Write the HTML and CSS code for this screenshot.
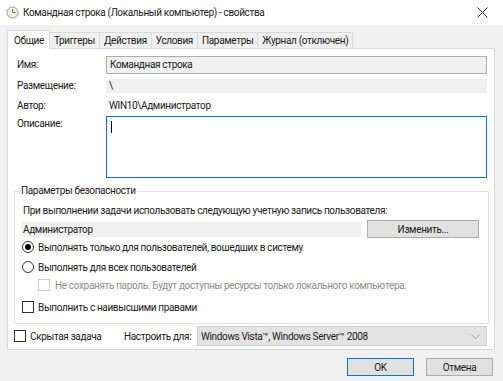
FILE: index.html
```html
<!DOCTYPE html>
<html lang="ru">
<head>
  <meta charset="UTF-8" />
  <title>Командная строка (Локальный компьютер) - свойства</title>
  <link rel="stylesheet" href="styles.css">
</head>
<body>

<!-- Title bar -->
<div class="titlebar">
  <svg class="app-icon" width="13" height="13" viewBox="0 0 13 13">
    <circle cx="6.5" cy="6.5" r="5.5" fill="#f3f0e2" stroke="#9a9a8e" stroke-width="1"/>
    <path d="M6.5 3 V6.5 H9" fill="none" stroke="#6b6b60" stroke-width="1"/>
  </svg>
  <span class="title">Командная строка (Локальный компьютер) - свойства</span>
  <svg class="close" width="11" height="11" viewBox="0 0 11 11">
    <path d="M0.5 0.5 L10.5 10.5 M10.5 0.5 L0.5 10.5" stroke="#333" stroke-width="1"/>
  </svg>
</div>

<!-- Tabs -->
<div class="tabs">
  <div class="tab active">Общие</div>
  <div class="tab">Триггеры</div>
  <div class="tab">Действия</div>
  <div class="tab">Условия</div>
  <div class="tab">Параметры</div>
  <div class="tab">Журнал (отключен)</div>
</div>

<div class="panel">
  <div class="info">
    <div class="lbl">Имя:</div>
    <div class="field readonly">Командная строка</div>

    <div class="lbl">Размещение:</div>
    <div class="field band">\</div>

    <div class="lbl author">Автор:</div>
    <div class="field plain">WIN10\Администратор</div>

    <div class="lbl desc">Описание:</div>
    <div class="field area"><span class="caret"></span></div>
  </div>

  <!-- Security group -->
  <div class="group">
    <div class="legend">Параметры безопасности</div>
    <div class="line">При выполнении задачи использовать следующую учетную запись пользователя:</div>
    <div class="account">
      <div class="account-name">Администратор</div>
      <button class="btn change">Изменить...</button>
    </div>
    <div class="option first">
      <span class="radio checked"></span>Выполнять только для пользователей, вошедших в систему
    </div>
    <div class="option second">
      <span class="radio"></span>Выполнять для всех пользователей
    </div>
    <div class="option sub disabled">
      <span class="check"></span>Не сохранять пароль. Будут доступны ресурсы только локального компьютера.
    </div>
    <div class="option">
      <span class="check"></span>Выполнить с наивысшими правами
    </div>
  </div>

  <div class="bottom-row">
    <div class="option hidden-task"><span class="check"></span>Скрытая задача</div>
    <div class="config-label">Настроить для:</div>
    <div class="select">
      <span>Windows Vista™, Windows Server™ 2008</span>
      <svg width="9" height="5" viewBox="0 0 9 5"><path d="M0.5 0.5 L4.5 4.5 L8.5 0.5" fill="none" stroke="#a0a0a0" stroke-width="1"/></svg>
    </div>
  </div>
</div>

<div class="buttons">
  <button class="btn ok">OK</button>
  <button class="btn">Отмена</button>
</div>

</body>
</html>
```

FILE: styles.css
```css
body {
  margin: 0;
  width: 503px;
  height: 381px;
  background: #f0f0f0;
  font-family: Roboto, 'Noto Sans', sans-serif;
  font-size: 10px;
  letter-spacing: -0.35px;
  color: #1a1a1a;
  overflow: hidden;
  white-space: nowrap;
}

.titlebar {
  height: 25px;
  background: #fff;
  display: flex;
  align-items: center;
  padding-left: 6px;
}

.app-icon {
  margin-right: 4px;
}

.title {
  font-size: 10px;
  letter-spacing: -0.35px;
  flex: 1;
}

.close {
  margin-right: 15px;
}

.tabs {
  display: flex;
  align-items: flex-end;
  height: 23px;
  padding-left: 7px;
}

.tab {
  height: 16px;
  line-height: 15px;
  padding: 0 4px;
  border: 1px solid #d9d9d9;
  border-bottom: none;
  border-left: none;
  background: #f0f0f0;
  box-sizing: border-box;
}

.tab.active {
  height: 19px;
  line-height: 19px;
  background: #fff;
  border-left: 1px solid #d9d9d9;
  padding: 0 5px 0 6px;
  position: relative;
  z-index: 1;
  margin-bottom: -1px;
}

.panel {
  margin: 0 8px 0 7px;
  height: 302px;
  background: #fff;
  border: 1px solid #d9d9d9;
  box-sizing: border-box;
  padding: 7px 0 0 6px;
}

.info {
  display: grid;
  grid-template-columns: 89px 381px;
  grid-template-rows: 18px 14px 16px 61px;
  row-gap: 5px;
  padding-left: 3px;
}

.lbl {
  line-height: 14px;
}

.info .lbl:first-child {
  line-height: 18px;
}

.lbl.author {
  line-height: 16px;
}

.lbl.desc {
  margin-top: -2px;
}

.field {
  box-sizing: border-box;
  padding-left: 3px;
}

.field.readonly {
  height: 18px;
  line-height: 16px;
  background: #f0f0f0;
  border: 1px solid #adadad;
}

.field.band {
  height: 14px;
  line-height: 13px;
  background: #f0f0f0;
}

.field.plain {
  line-height: 16px;
}

.field.area {
  height: 62px;
  border: 1px solid #0078d7;
  padding: 4px 0 0 4px;
  margin-top: -3px;
}

.caret {
  display: block;
  width: 1px;
  height: 12px;
  background: #000;
}

.group {
  margin-top: 11px;
  width: 475px;
  height: 133px;
  border: 1px solid #e3e3e3;
  box-sizing: border-box;
  padding: 0 8px 0 7px;
}

.legend {
  width: fit-content;
  background: #fff;
  padding: 0 1px;
  margin: -8px 0 0 -2px;
  line-height: 14px;
}

.line {
  margin-top: 6px;
  line-height: 14px;
  padding-left: 1px;
}

.account {
  display: flex;
  align-items: center;
  height: 18px;
  margin-top: 2px;
}

.account-name {
  width: 340px;
  height: 15px;
  line-height: 15px;
  background: #f0f0f0;
  padding-left: 1px;
  box-sizing: border-box;
}

.btn {
  font-family: inherit;
  font-size: 10px;
  letter-spacing: -0.35px;
  color: #1a1a1a;
  background: #e1e1e1;
  border: 1px solid #adadad;
  height: 18px;
  padding: 0;
  box-sizing: border-box;
  line-height: 15px;
}

.btn.change {
  width: 112px;
  margin-left: 5px;
}

.option {
  display: flex;
  align-items: center;
  height: 14px;
  margin-top: 8px;
}

.option.first {
  margin-top: 2px;
}

.option.second {
  margin-top: 6px;
}

.option.sub {
  margin-top: 4px;
  padding-left: 16px;
}

.disabled {
  color: #8d8d8d;
}

.radio, .check {
  display: inline-block;
  width: 12px;
  height: 12px;
  box-sizing: border-box;
  border: 1px solid #333;
  margin-right: 4px;
  flex: none;
}

.radio {
  border-radius: 50%;
  position: relative;
}

.radio.checked::after {
  content: "";
  position: absolute;
  left: 2px;
  top: 2px;
  width: 6px;
  height: 6px;
  border-radius: 50%;
  background: #000;
}

.disabled .check {
  border-color: #cccccc;
  margin-right: 5px;
}

.bottom-row {
  display: flex;
  align-items: center;
  height: 20px;
  margin-top: 2px;
}

.option.hidden-task {
  margin-top: 0;
  width: 110px;
}

.hidden-task .check {
  margin-right: 4px;
}

.config-label {
  width: 73px;
}

.select {
  width: 290px;
  height: 20px;
  box-sizing: border-box;
  background: #e3e3e3;
  border: 1px solid #cfcfcf;
  display: flex;
  align-items: center;
  justify-content: space-between;
  padding: 0 6px 0 3px;
}

.buttons {
  display: flex;
  justify-content: flex-end;
  gap: 12px;
  padding: 8px 10px 0 0;
}

.buttons .btn {
  width: 67px;
  height: 18px;
}

.buttons .btn.ok {
  border: 1px solid #0078d7;
}
```
